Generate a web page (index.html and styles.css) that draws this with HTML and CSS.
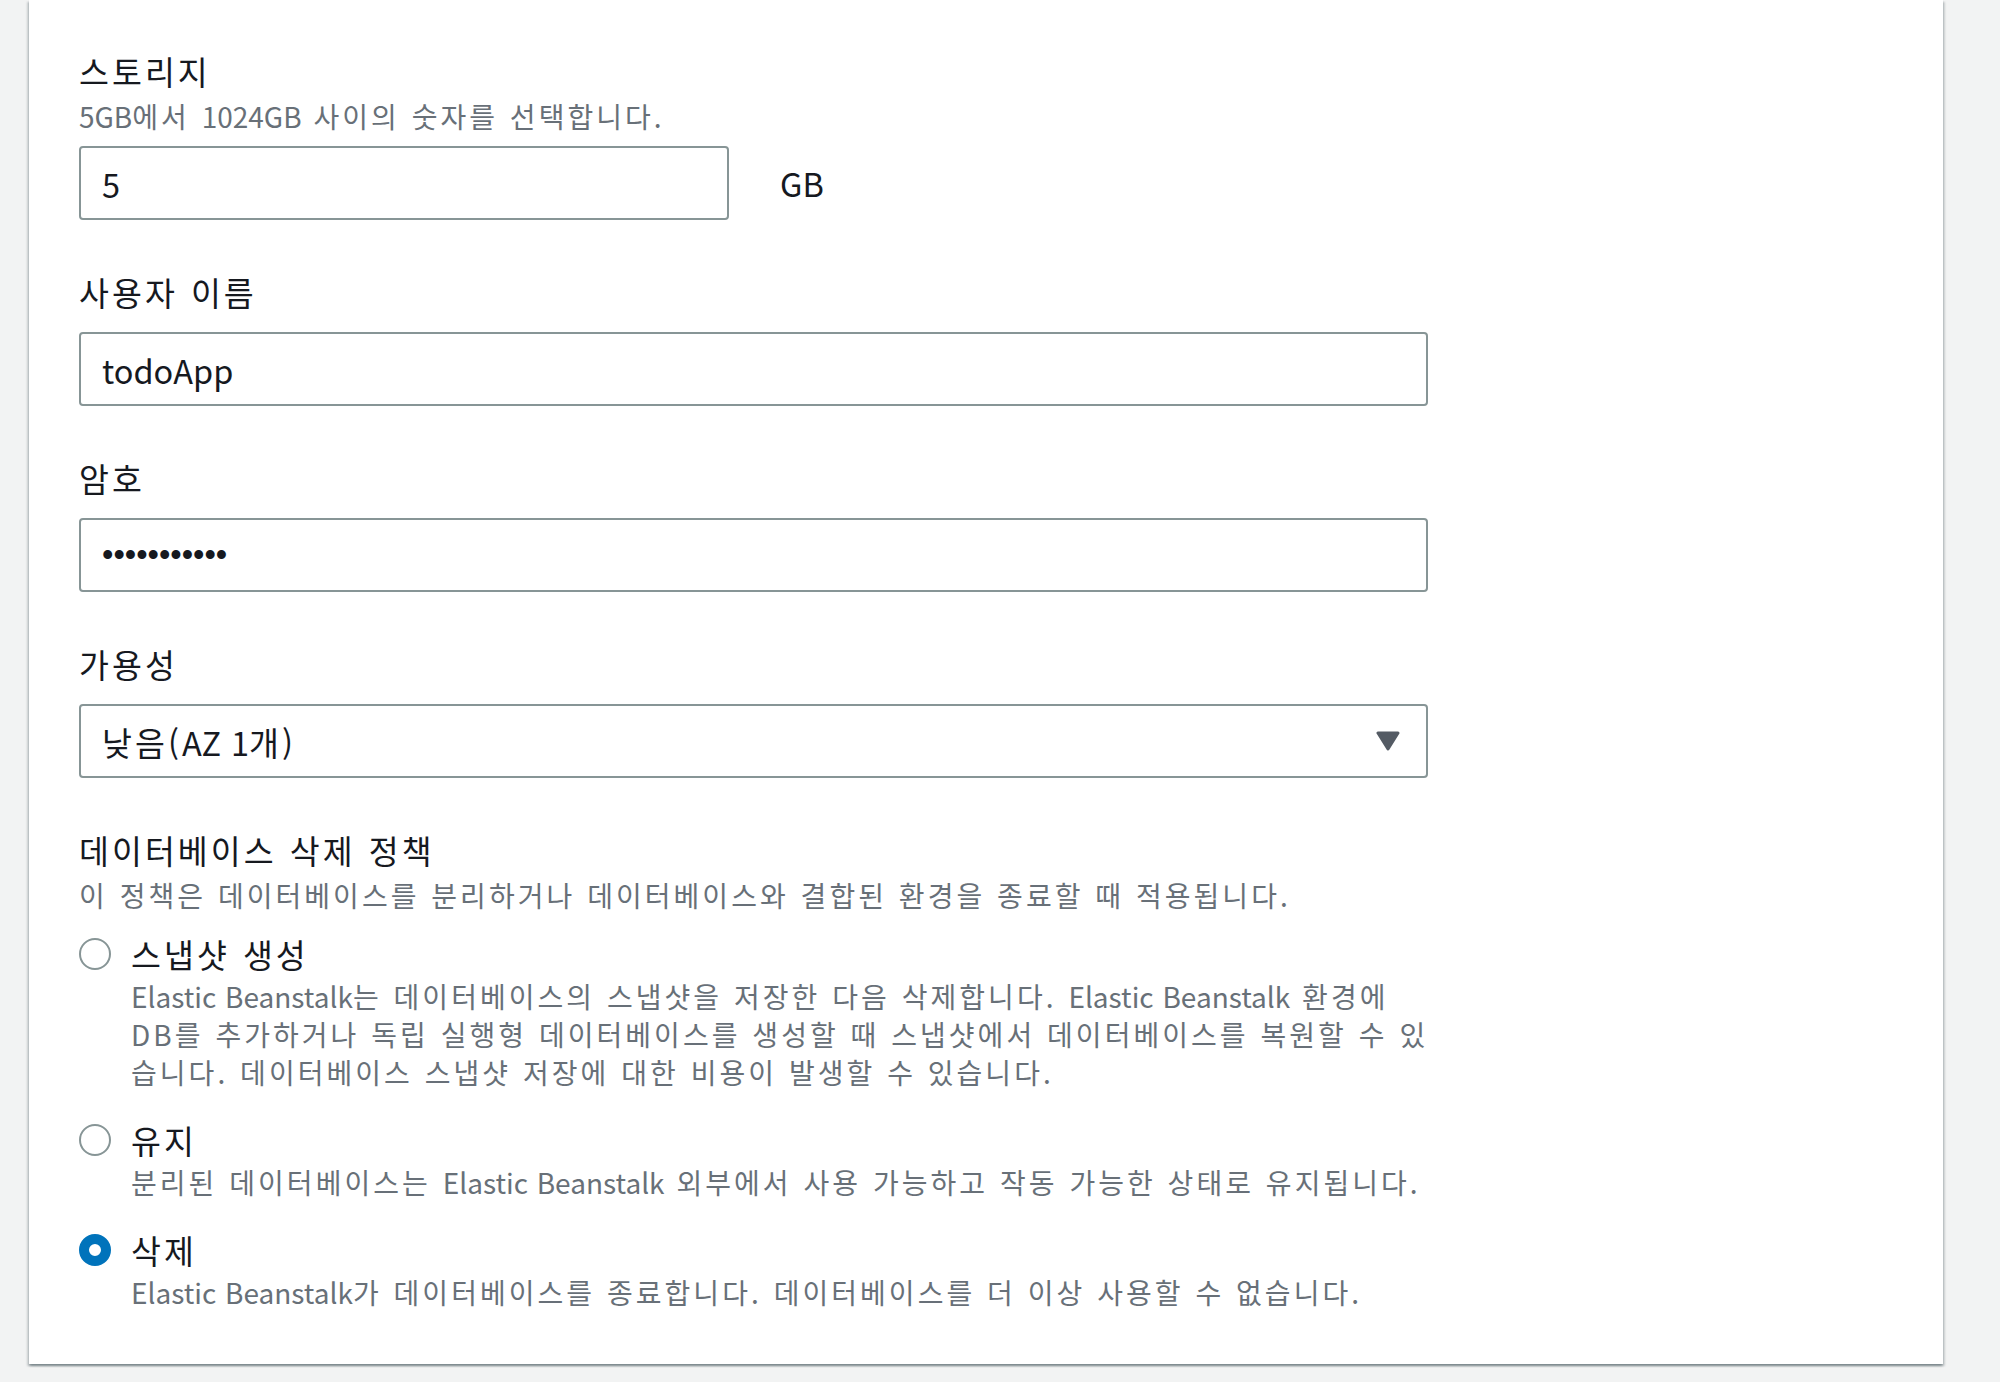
FILE: index.html
```html
<!DOCTYPE html>
<html lang="ko">
<head>
  <meta charset="UTF-8">
  <meta name="viewport" content="width=device-width, initial-scale=1.0">
  <title>데이터베이스 설정</title>
  <link rel="stylesheet" href="styles.css">
</head>
<body>
  <div class="page">
    <div class="card">
      <div class="form">
        <div class="field">
          <div class="label">스토리지</div>
          <div class="desc"><span class="en">5GB</span>에서 <span class="en">1024GB</span> 사이의 숫자를 선택합니다.</div>
          <div class="control unit-row">
            <input class="input input-short" type="text" value="5">
            <span class="unit">GB</span>
          </div>
        </div>

        <div class="field">
          <div class="label">사용자 이름</div>
          <div class="control">
            <input class="input" type="text" value="todoApp">
          </div>
        </div>

        <div class="field">
          <div class="label">암호</div>
          <div class="control">
            <input class="input input-pw" type="password" value="todoapppass">
          </div>
        </div>

        <div class="field">
          <div class="label">가용성</div>
          <div class="control">
            <div class="select">
              <span>낮음(<span class="en">AZ 1</span>개)</span>
              <svg class="caret" width="24" height="20" viewBox="0 0 24 20">
                <polygon points="2,2 22,2 12,18" fill="#545b64" stroke="#545b64" stroke-width="3" stroke-linejoin="round"/>
              </svg>
            </div>
          </div>
        </div>

        <div class="field">
          <div class="label">데이터베이스 삭제 정책</div>
          <div class="desc">이 정책은 데이터베이스를 분리하거나 데이터베이스와 결합된 환경을 종료할 때 적용됩니다.</div>
          <div class="radios">
            <div class="radio-item">
              <div class="radio-row">
                <span class="radio"></span>
                <span class="radio-label">스냅샷 생성</span>
              </div>
              <!-- line breaks kept as in the console -->
              <div class="radio-desc keep-lines"><span class="en">Elastic Beanstalk</span>는 데이터베이스의 스냅샷을 저장한 다음 삭제합니다. <span class="en">Elastic Beanstalk</span> 환경에<br>DB를 추가하거나 독립 실행형 데이터베이스를 생성할 때 스냅샷에서 데이터베이스를 복원할 수 있<br>습니다. 데이터베이스 스냅샷 저장에 대한 비용이 발생할 수 있습니다.</div>
            </div>
            <div class="radio-item">
              <div class="radio-row">
                <span class="radio"></span>
                <span class="radio-label">유지</span>
              </div>
              <div class="radio-desc">분리된 데이터베이스는 <span class="en">Elastic Beanstalk</span> 외부에서 사용 가능하고 작동 가능한 상태로 유지됩니다.</div>
            </div>
            <div class="radio-item">
              <div class="radio-row">
                <span class="radio checked"></span>
                <span class="radio-label">삭제</span>
              </div>
              <div class="radio-desc"><span class="en">Elastic Beanstalk</span>가 데이터베이스를 종료합니다. 데이터베이스를 더 이상 사용할 수 없습니다.</div>
            </div>
          </div>
        </div>
      </div>
    </div>
  </div>
</body>
</html>
```

FILE: styles.css
```css
*{
  margin:0;
  padding:0;
  box-sizing:border-box;
}
body{
  background:#f2f3f3;
  font-family:"Noto Sans CJK KR","Noto Sans",sans-serif;
  color:#16191f;
  /* hangul in the original font runs wider than latin */
  letter-spacing:0.19em;
  word-spacing:0.06em;
  height:1382px;
  overflow:hidden;
}
.en{
  letter-spacing:0;
}
.page{
  padding:0 57px 0 29px;
}
.card{
  background:#fff;
  padding:51px 50px 53px;
  box-shadow:0 2px 2px 0 rgba(0,28,36,.3),
             2px 2px 2px 0 rgba(0,28,36,.15),
             -2px 2px 2px 0 rgba(0,28,36,.15);
}
.form{
  width:1349px;
}
.field + .field{
  margin-top:52px;
}
.label{
  font-size:32.5px;
  line-height:40px;
}
.desc{
  font-size:28px;
  line-height:34px;
  color:#687078;
  margin-top:8px;
}
.control{
  margin-top:20px;
}
.desc + .control{
  margin-top:13px;
}
.input{
  display:block;
  width:100%;
  height:74px;
  border:2px solid #879596;
  border-radius:4px;
  padding:0 21px;
  font-family:inherit;
  font-size:32.5px;
  letter-spacing:normal;
  word-spacing:normal;
  color:#16191f;
  background:#fff;
  outline:none;
}
.input-pw{
  font-family:"Liberation Sans",sans-serif;
}
.unit-row{
  display:flex;
  align-items:center;
}
.input-short{
  width:650px;
}
.unit{
  margin-left:51px;
  font-size:32.5px;
  line-height:40px;
  letter-spacing:0;
}
.select{
  display:flex;
  align-items:center;
  justify-content:space-between;
  height:74px;
  border:2px solid #879596;
  border-radius:4px;
  padding:0 26px 0 21px;
  font-size:32.5px;
}
.caret{
  display:block;
}
.radios{
  margin-top:22px;
}
.radio-item + .radio-item{
  margin-top:29px;
}
.radio-row{
  display:flex;
  align-items:center;
  height:40px;
}
.radio{
  width:32px;
  height:32px;
  border-radius:50%;
  border:2px solid #879596;
  background:#fff;
  flex:none;
}
.radio.checked{
  border:10px solid #0073bb;
}
.radio-label{
  margin-left:20px;
  font-size:32.5px;
  line-height:40px;
}
.radio-desc{
  margin-top:3px;
  padding-left:52px;
  font-size:28px;
  line-height:38px;
  color:#687078;
}
.keep-lines{
  white-space:nowrap;
}
```
